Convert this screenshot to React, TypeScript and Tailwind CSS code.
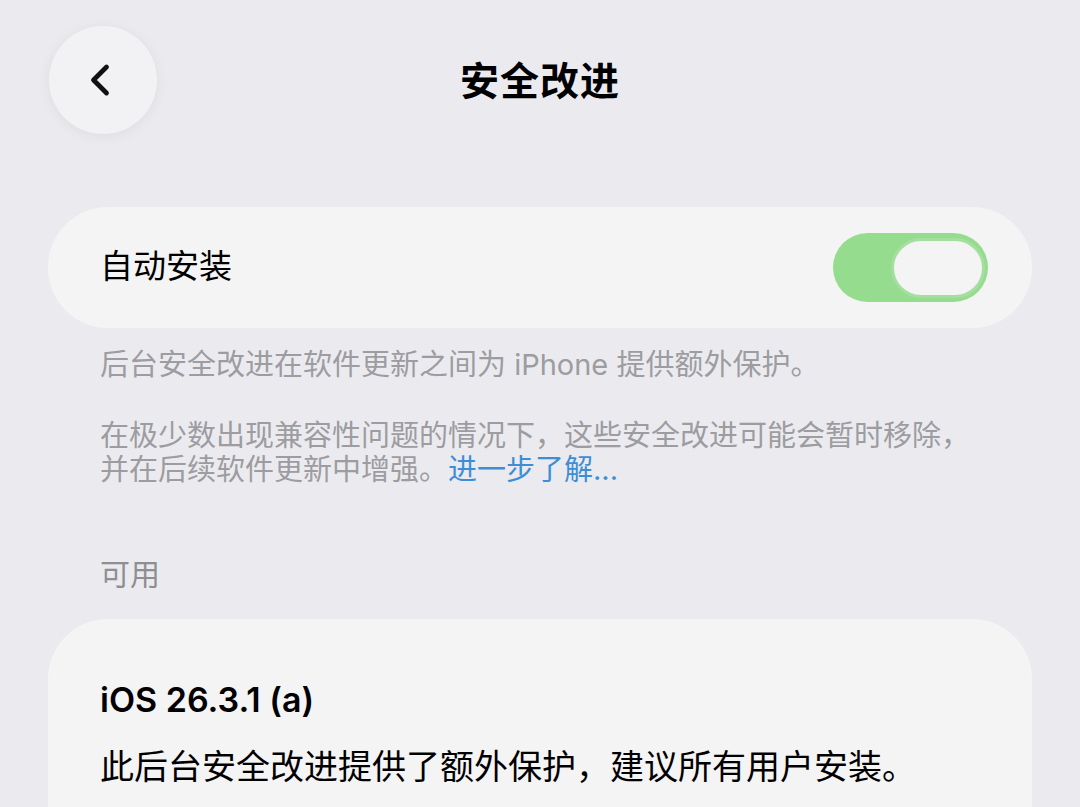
import { ChevronLeft } from 'lucide-react';

const FONT = { fontFamily: 'Inter, "Noto Sans CJK SC", sans-serif' };

export default function App() {
    return (
        <div className="min-h-[807px] w-[1080px] bg-[#ebebef] text-black overflow-hidden" style={FONT}>
            {/* Nav bar */}
            <header className="grid grid-cols-[108px_1fr_108px] items-center pl-[49px] pr-[49px] pt-[26px]">
                <button className="w-[108px] h-[108px] rounded-full bg-[#f2f2f5] shadow-[0_2px_14px_rgba(0,0,0,0.06)] flex items-center justify-center">
                    <ChevronLeft className="w-[52px] h-[52px] text-[#111] -ml-[6px]" strokeWidth={2.2} />
                </button>
                <h1 className="text-center text-[39px] font-semibold tracking-[1px] leading-none">安全改进</h1>
                <div />
            </header>

            {/* Auto install */}
            <section className="mt-[73px] mx-[48px] h-[121px] rounded-[60px] bg-[#f4f4f5] flex items-center justify-between pl-[52px] pr-[44px]">
                <span className="text-[33px] leading-none pb-[2px]">自动安装</span>
                <div className="w-[155px] h-[69px] rounded-full bg-[#96dc8f] flex items-center justify-end pr-[3px]">
                    <div className="w-[94px] h-[60px] rounded-full bg-[#f3f4f3] border-[3px] border-[#a5dfa0]" />
                </div>
            </section>

            {/* Footer */}
            <div className="px-[100px] pt-[20px] text-[29px] leading-[34px] text-[#9c9ca1]">
                <p>后台安全改进在软件更新之间为 iPhone 提供额外保护。</p>
                <p className="mt-[37px]">
                    在极少数出现兼容性问题的情况下，这些安全改进可能会暂时移除，
                    <br />
                    并在后续软件更新中增强。<span className="text-[#3d8ed6]">进一步了解...</span>
                </p>
            </div>

            {/* Available */}
            <div className="px-[100px] pt-[72px] text-[30px] leading-none text-[#8e8e93]">可用</div>

            <section className="mt-[30px] mx-[48px] rounded-t-[60px] bg-[#f4f4f5] pl-[52px] pr-[44px] pt-[64px] pb-[40px]">
                <h2 className="text-[34px] font-semibold leading-none">iOS 26.3.1 (a)</h2>
                <p className="mt-[33px] text-[34px] leading-none">此后台安全改进提供了额外保护，建议所有用户安装。</p>
            </section>
        </div>
    );
}
